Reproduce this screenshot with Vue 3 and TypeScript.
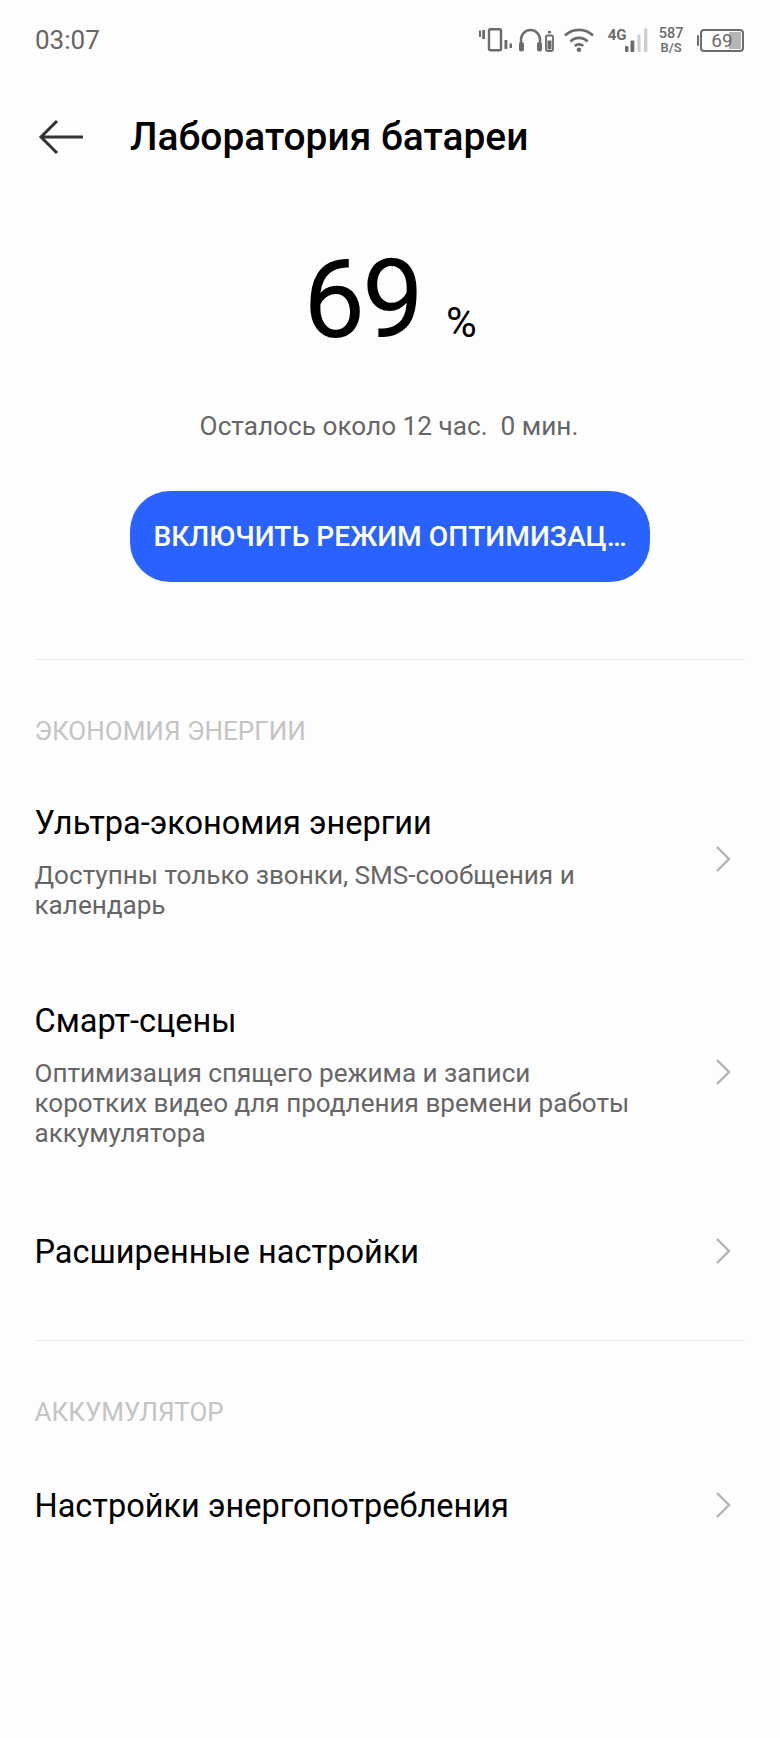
<script setup lang="ts">
interface Row {
  title: string;
  lines?: string[];
  cls: string;
}

const saving: Row[] = [
  {
    title: "Ультра-экономия энергии",
    lines: ["Доступны только звонки, SMS-сообщения и", "календарь"],
    cls: "ultra",
  },
  {
    title: "Смарт-сцены",
    lines: [
      "Оптимизация спящего режима и записи",
      "коротких видео для продления времени работы",
      "аккумулятора",
    ],
    cls: "smart",
  },
  { title: "Расширенные настройки", cls: "plain" },
];
</script>

<template>
  <div class="page">
    <div class="status">
      <span class="time">03:07</span>
      <div class="icons">
        <svg width="33" height="24" viewBox="0 0 33 24" fill="none">
          <rect x="10" y="1.2" width="12" height="21" rx="1.5" stroke="#6b6b6b" stroke-width="2.4" />
          <rect x="0" y="2.5" width="2" height="6.5" fill="#6b6b6b" />
          <rect x="3.2" y="2" width="2.8" height="9" fill="#6b6b6b" />
          <rect x="25.5" y="12" width="2.8" height="9" fill="#6b6b6b" />
          <rect x="30.5" y="15.5" width="2.5" height="4.5" fill="#6b6b6b" />
        </svg>
        <svg class="phones" width="35" height="24" viewBox="0 0 35 24" fill="none">
          <path d="M2 18v-6.5a9.5 9.5 0 0 1 19 0V18" stroke="#6b6b6b" stroke-width="2.4" />
          <rect x="0" y="14" width="5" height="9.5" rx="2.2" fill="#6b6b6b" />
          <rect x="18" y="14" width="5" height="9.5" rx="2.2" fill="#6b6b6b" />
          <rect x="27" y="7.5" width="7" height="15.5" rx="1.5" stroke="#6b6b6b" stroke-width="1.8" />
          <rect x="28.5" y="12.5" width="4" height="9" fill="#6b6b6b" />
          <rect x="29" y="3" width="3" height="2.2" fill="#6b6b6b" />
        </svg>
        <svg class="wifi" width="30" height="25" viewBox="0 0 30 25" fill="none" stroke="#6b6b6b" stroke-width="2.7">
          <path d="M1 7.5a20 20 0 0 1 28 0" />
          <path d="M6.5 13.5a12 12 0 0 1 17 0" />
          <path d="M10.8 18a6 6 0 0 1 8.4 0" />
          <circle cx="15" cy="21.8" r="2.3" fill="#6b6b6b" stroke="none" />
        </svg>
        <div class="net">
          <span class="g4">4G</span>
          <svg width="23" height="24" viewBox="0 0 23 24">
            <rect x="0" y="18" width="3.4" height="6" rx="1" fill="#6b6b6b" />
            <rect x="5.5" y="12.5" width="3.8" height="11.5" rx="1" fill="#6b6b6b" />
            <rect x="12.5" y="6.5" width="3" height="17.5" rx="1" fill="#cdcdcd" />
            <rect x="19" y="0.5" width="3.4" height="23.5" rx="1" fill="#cdcdcd" />
          </svg>
        </div>
        <div class="speed"><span>587</span><span class="unit">B/S</span></div>
        <div class="battery">
          <i class="nub"></i>
          <div class="shell">
            <i class="fill"></i>
            <span>69</span>
          </div>
        </div>
      </div>
    </div>

    <header class="head">
      <svg width="46" height="36" viewBox="0 0 46 36" fill="none" stroke="#333" stroke-width="3">
        <path d="M45 18H3M19 2 3 18l16 16" />
      </svg>
      <h1>Лаборатория батареи</h1>
    </header>

    <div class="level">
      <span class="num">69</span>
      <span class="pct">%</span>
    </div>
    <p class="left">Осталось около 12 час.&nbsp; 0 мин.</p>
    <button class="cta">ВКЛЮЧИТЬ РЕЖИМ ОПТИМИЗАЦ…</button>

    <hr class="rule first" />
    <div class="label">ЭКОНОМИЯ ЭНЕРГИИ</div>
    <div v-for="row in saving" :key="row.title" class="row" :class="row.cls">
      <div class="txt">
        <div class="title">{{ row.title }}</div>
        <div v-if="row.lines" class="sub">
          <div v-for="l in row.lines" :key="l">{{ l }}</div>
        </div>
      </div>
      <svg width="16" height="28" viewBox="0 0 16 28" fill="none" stroke="#b3b3b3" stroke-width="2.4">
        <path d="M2 2l12 12L2 26" />
      </svg>
    </div>

    <hr class="rule second" />
    <div class="label">АККУМУЛЯТОР</div>
    <div class="row plain last">
      <div class="txt"><div class="title">Настройки энергопотребления</div></div>
      <svg width="16" height="28" viewBox="0 0 16 28" fill="none" stroke="#b3b3b3" stroke-width="2.4">
        <path d="M2 2l12 12L2 26" />
      </svg>
    </div>
  </div>
</template>

<style>
body {
  background: #fdfdfd;
}
</style>

<style scoped>
.page {
  width: 780px;
  height: 1738px;
  overflow: hidden;
  background: #fdfdfd;
  font-family: Roboto, "Liberation Sans", sans-serif;
  color: #000;
}
.status {
  height: 80px;
  padding: 0 36px 0 35px;
  display: flex;
  align-items: center;
  justify-content: space-between;
  box-sizing: border-box;
}
.time {
  font-size: 26px;
  color: #666;
}
.icons {
  display: flex;
  align-items: center;
}
.phones {
  margin-left: 7px;
}
.wifi {
  margin-left: 10px;
}
.net {
  position: relative;
  width: 40px;
  height: 24px;
  margin-left: 14px;
  display: flex;
  justify-content: flex-end;
  align-items: flex-end;
}
.g4 {
  position: absolute;
  left: 0;
  top: -2px;
  font-size: 15px;
  font-weight: 700;
  color: #6b6b6b;
}
.speed {
  margin-left: 11px;
  padding-top: 1px;
  display: flex;
  flex-direction: column;
  align-items: center;
  font-size: 14.5px;
  font-weight: 500;
  line-height: 14px;
  color: #6b6b6b;
}
.unit {
  font-size: 13px;
}
.battery {
  margin-left: 13px;
  display: flex;
  align-items: center;
}
.nub {
  width: 2.5px;
  height: 11px;
  background: #6b6b6b;
  border-radius: 1px;
  margin-right: 1px;
}
.shell {
  position: relative;
  width: 40px;
  height: 19px;
  border: 2px solid #6b6b6b;
  border-radius: 4px;
  display: flex;
  align-items: center;
  justify-content: center;
  overflow: hidden;
  font-size: 19px;
  color: #6b6b6b;
}
.shell span {
  position: relative;
}
.fill {
  position: absolute;
  right: 1px;
  top: 1px;
  bottom: 1px;
  width: 12px;
  background: #b5b5b5;
}
.head {
  height: 113px;
  padding-left: 38px;
  display: flex;
  align-items: center;
  box-sizing: border-box;
}
.head h1 {
  margin: 0 0 0 46px;
  font-size: 38.9px;
  font-weight: 500;
}
.level {
  height: 150px;
  margin-top: 32px;
  display: flex;
  justify-content: center;
  align-items: baseline;
}
.num {
  font-size: 110px;
  line-height: 150px;
  letter-spacing: -3px;
}
.pct {
  font-size: 42px;
  margin-left: 25px;
}
.left {
  margin: 36px 0 0;
  padding-right: 2px;
  text-align: center;
  font-size: 26.2px;
  line-height: 30px;
  color: #666;
}
.cta {
  display: block;
  width: 520px;
  height: 91px;
  margin: 50px auto 0;
  border: 0;
  border-radius: 40px;
  background: #2962ff;
  color: #fff;
  font-family: inherit;
  font-size: 28.2px;
  font-weight: 500;
  padding: 0;
}
.rule {
  border: 0;
  height: 1px;
  background: #eee;
  margin: 0 35px;
}
.first {
  margin-top: 77px;
}
.second {
  margin-top: 68px;
}
.label {
  margin: 56px 35px 0 34.5px;
  font-size: 26px;
  line-height: 30px;
  color: #c4c4c4;
}
.row {
  display: flex;
  align-items: center;
  justify-content: space-between;
  padding: 0 35px 0 34.5px;
}
.row svg {
  margin-right: 14px;
  flex: none;
}
.ultra svg,
.smart svg {
  margin-bottom: 6px;
}
.plain svg {
  margin-bottom: 2px;
}
.title {
  font-size: 32.5px;
  line-height: 40px;
}
.sub {
  margin-top: 17px;
  font-size: 26.1px;
  line-height: 30.2px;
  color: #666;
}
.ultra {
  margin-top: 57px;
}
.smart {
  margin-top: 80.5px;
}
.plain {
  margin-top: 83px;
}
.last {
  margin-top: 59px;
}
</style>
